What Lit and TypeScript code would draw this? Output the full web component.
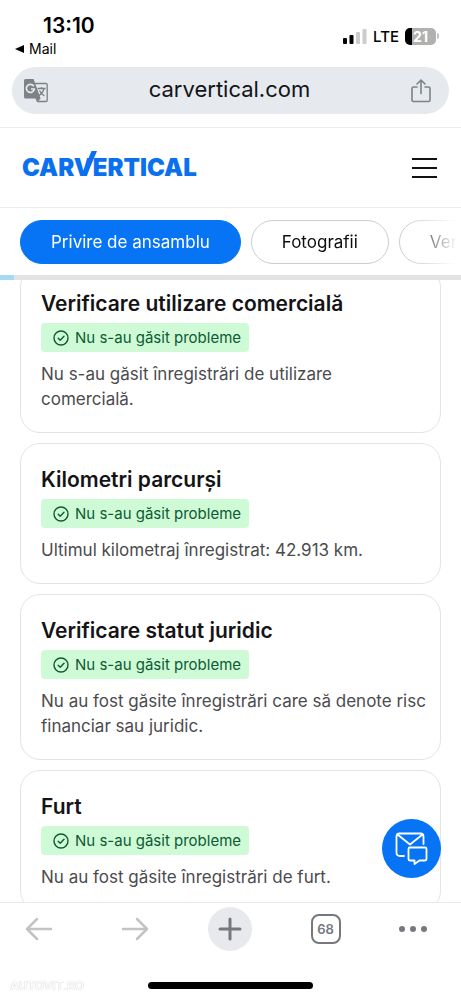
import { LitElement, html, css } from "lit";
import { customElement, property, query } from "lit/decorators.js";

interface Check {
  title: string;
  text: string;
}

const CHECKS: Check[] = [
  { title: "Verificare utilizare comercială", text: "Nu s-au găsit înregistrări de utilizare comercială." },
  { title: "Kilometri parcurși", text: "Ultimul kilometraj înregistrat: 42.913 km." },
  { title: "Verificare statut juridic", text: "Nu au fost găsite înregistrări care să denote risc financiar sau juridic." },
  { title: "Furt", text: "Nu au fost găsite înregistrări de furt." },
];

const base = css`
  * {
    box-sizing: border-box;
  }
  button {
    display: flex;
    align-items: center;
    justify-content: center;
    flex: none;
    margin: 0;
    padding: 0;
    border: 0;
    background: none;
    color: inherit;
    font: inherit;
    cursor: pointer;
  }
  svg {
    display: block;
    flex: none;
  }
`;

@customElement("check-card")
export class CheckCard extends LitElement {
  @property() heading = "";
  @property() text = "";

  static styles = [
    base,
    css`
      :host {
        display: block;
        padding: 20px 12px 20px 20px;
        border: 1px solid #e4e4e6;
        border-radius: 20px;
        background: #fff;
      }
      .title {
        margin: 0 0 3px;
        font-size: 21px;
        font-weight: 600;
        line-height: 32px;
        color: #141416;
      }
      .badge {
        display: flex;
        align-items: center;
        gap: 6px;
        width: fit-content;
        height: 29px;
        padding: 0 8px 0 12px;
        border-radius: 4px;
        background: #cffad6;
        color: #0b5a32;
        font-size: 15px;
      }
      .text {
        margin: 10px 0 0;
        font-size: 17px;
        line-height: 25px;
        color: #4b4b4e;
      }
    `,
  ];

  render() {
    return html`
      <h2 class="title">${this.heading}</h2>
      <div class="badge">
        <svg width="16" height="16" viewBox="0 0 16 16" fill="none" stroke="currentColor" stroke-width="1.4" stroke-linecap="round" stroke-linejoin="round">
          <circle cx="8" cy="8" r="7" />
          <path d="M5.2 8.3l2 2 3.8-4" />
        </svg>
        <span>Nu s-au găsit probleme</span>
      </div>
      <p class="text">${this.text}</p>
    `;
  }
}

@customElement("app-root")
export class AppRoot extends LitElement {
  @query(".content") content!: HTMLElement;

  static styles = [
    base,
    css`
      :host {
        position: relative;
        display: flex;
        flex-direction: column;
        height: 100vh;
        overflow: hidden;
        background: #fff;
        color: #0d0d0f;
        font-family: Inter, "Liberation Sans", sans-serif;
      }
      .status {
        display: flex;
        justify-content: space-between;
        flex: none;
        height: 67px;
        padding: 13px 22px 0 15px;
      }
      .clock {
        padding-left: 28px;
        font-size: 21px;
        font-weight: 600;
        line-height: 26px;
        color: #000;
      }
      .back {
        display: flex;
        align-items: center;
        gap: 5px;
        font-size: 14px;
        line-height: 20px;
        color: #000;
      }
      .signals {
        display: flex;
        align-items: center;
        gap: 6px;
        height: 46px;
        font-size: 15px;
        font-weight: 500;
        color: #000;
      }
      .battery {
        display: flex;
        align-items: center;
      }
      .level {
        width: 31px;
        height: 17px;
        border-radius: 5px;
        background: linear-gradient(90deg, #000 7px, #b1b1b2 7px);
        color: #fff;
        font-size: 14px;
        font-weight: 700;
        line-height: 17px;
        text-align: center;
      }
      .tip {
        width: 2px;
        height: 6px;
        margin-left: 1px;
        border-radius: 0 2px 2px 0;
        background: #c4c4c5;
      }
      .address {
        display: flex;
        align-items: center;
        justify-content: space-between;
        flex: none;
        height: 47px;
        margin: 0 12px 13px;
        padding: 0 18px 0 12px;
        border-radius: 24px;
        background: #e6e9ed;
        color: #7d8287;
      }
      .url {
        padding-bottom: 3px;
        color: #111418;
        font-size: 22px;
      }
      .header {
        display: flex;
        align-items: center;
        justify-content: space-between;
        flex: none;
        height: 81px;
        padding: 0 24px 0 22px;
        border-top: 1px solid #ececee;
        border-bottom: 1px solid #ececee;
      }
      .logo {
        color: #0a70f0;
        font-size: 24px;
        font-weight: 900;
        line-height: 28px;
        text-decoration: none;
      }
      .vee {
        position: relative;
      }
      .slash {
        position: absolute;
        left: 7px;
        top: -2px;
      }
      .tabs {
        display: flex;
        gap: 10px;
        flex: none;
        padding: 12px 0 11px 20px;
        overflow: hidden;
        mask-image: linear-gradient(90deg, #000 calc(100% - 55px), transparent calc(100% - 4px));
      }
      .tab {
        height: 44px;
        padding: 0 30px;
        border: 1px solid #cdcdd0;
        border-radius: 22px;
        font-size: 17px;
      }
      .tab.active {
        border-color: #0674f5;
        background: #0674f5;
        color: #fff;
      }
      .progress {
        flex: none;
        height: 5px;
        background: #e3e3e3;
      }
      .done {
        height: 100%;
        background: #a5daf6;
      }
      .content {
        flex: 1;
        min-height: 0;
        overflow-y: auto;
        scrollbar-width: none;
      }
      .cards {
        display: flex;
        flex-direction: column;
        gap: 10px;
        padding: 12px 20px 30px;
      }
      .toolbar {
        display: flex;
        justify-content: space-between;
        flex: none;
        padding: 4px 34px 0 17px;
        border-top: 1px solid #e8e8ea;
        color: #75797e;
      }
      .tool {
        width: 44px;
        height: 44px;
      }
      .tool.dim {
        color: #c2c3c5;
      }
      .tool.add {
        border-radius: 50%;
        background: #e8e9ed;
      }
      .tool.more {
        width: 28px;
      }
      .count {
        width: 30px;
        height: 30px;
        border: 2px solid #75797e;
        border-radius: 8px;
        font-size: 13px;
        font-weight: 600;
        line-height: 26px;
      }
      .footer {
        display: grid;
        grid-template-columns: 1fr 165px 1fr;
        align-items: center;
        flex: none;
        height: 26px;
        margin-top: 21px;
      }
      .mark {
        padding-left: 10px;
        color: #fff;
        font-size: 12px;
        font-weight: 600;
        text-shadow: 0 0 1px #b4b4b4;
      }
      .home {
        height: 7px;
        border-radius: 4px;
        background: #000;
      }
      .chat {
        position: absolute;
        right: 20px;
        bottom: 120px;
        width: 59px;
        height: 59px;
        border-radius: 50%;
        background: #0674f5;
        color: #fff;
      }
    `,
  ];

  firstUpdated() {
    requestAnimationFrame(() => {
      this.content.scrollTop = 25;
    });
  }

  render() {
    return html`
      <div class="status">
        <div>
          <div class="clock">13:10</div>
          <button class="back">
            <svg width="9" height="8" viewBox="0 0 9 8" fill="currentColor"><path d="M9 0v8L0 4z" /></svg>
            Mail
          </button>
        </div>
        <div class="signals">
          <svg width="24" height="16" viewBox="0 0 24 16">
            <rect x="0" y="10" width="4" height="6" rx="1" fill="#000" />
            <rect x="6.5" y="7" width="4" height="9" rx="1" fill="#000" />
            <rect x="13" y="4" width="4" height="12" rx="1" fill="#ccc" />
            <rect x="19.5" y="1" width="4" height="15" rx="1" fill="#ccc" />
          </svg>
          <span>LTE</span>
          <span class="battery"><span class="level">21</span><span class="tip"></span></span>
        </div>
      </div>

      <div class="address">
        <button aria-label="Traducere">
          <svg width="24" height="24" viewBox="0 0 24 24">
            <path d="M11 4.500h11q1.200 0 1.200 1.200v15.600q0 1.200-1.200 1.200H14" fill="none" stroke="currentColor" stroke-width="1.300" />
            <path d="M1.500 0H9.600l7 19.500H1.500Q0 19.500 0 18V1.500Q0 0 1.500 0zM11.500 19.500h5l-3.300 4z" fill="currentColor" />
            <path d="M9.800 7.300A4 4 0 1 0 10.300 10H7" fill="none" stroke="#e6e9ed" stroke-width="1.700" />
            <path d="M13.500 9.500h8M17.500 8v1.500M20 9.500q-1 4.500-5 7M15.500 11.500q1.500 3.500 5 5.500" fill="none" stroke="currentColor" stroke-width="1.300" />
          </svg>
        </button>
        <span class="url">carvertical.com</span>
        <button aria-label="Distribuie">
          <svg width="20" height="24" viewBox="0 0 20 24" fill="none" stroke="currentColor" stroke-width="1.600" stroke-linecap="round" stroke-linejoin="round">
            <path d="M6 8H2.500Q1 8 1 9.500v11.500Q1 22.500 2.500 22.500h15q1.500 0 1.500-1.500V9.500Q19 8 17.500 8H14M10 14.500V1.500M6 5l4-4 4 4" />
          </svg>
        </button>
      </div>

      <header class="header">
        <a class="logo" href="#">CAR<span class="vee">V<svg class="slash" width="16" height="25" viewBox="0 0 16 25"><path d="M10.500 0H16L5.500 25H0z" fill="currentColor" /></svg></span>ERTICAL</a>
        <button aria-label="Meniu">
          <svg width="25" height="22" viewBox="0 0 25 22" stroke="#111" stroke-width="2"><path d="M0 2h25M0 11h25M0 20h25" /></svg>
        </button>
      </header>

      <nav class="tabs">
        <button class="tab active">Privire de ansamblu</button>
        <button class="tab">Fotografii</button>
        <button class="tab">Verificări</button>
      </nav>
      <div class="progress"><div class="done" style="width: 3%"></div></div>

      <main class="content">
        <div class="cards">
          ${CHECKS.map((c) => html`<check-card .heading=${c.title} .text=${c.text}></check-card>`)}
        </div>
      </main>

      <nav class="toolbar">
        <button class="tool dim" aria-label="Înapoi">
          <svg width="28" height="24" viewBox="0 0 28 24" fill="none" stroke="currentColor" stroke-width="2.500" stroke-linecap="round" stroke-linejoin="round"><path d="M26 12H2M12 2L2 12l10 10" /></svg>
        </button>
        <button class="tool dim" aria-label="Înainte">
          <svg width="28" height="24" viewBox="0 0 28 24" fill="none" stroke="currentColor" stroke-width="2.500" stroke-linecap="round" stroke-linejoin="round"><path d="M2 12h24M16 2l10 10-10 10" /></svg>
        </button>
        <button class="tool add" aria-label="Filă nouă">
          <svg width="24" height="24" viewBox="0 0 24 24" stroke="currentColor" stroke-width="3" stroke-linecap="round"><path d="M12 2v20M2 12h20" /></svg>
        </button>
        <button class="tool" aria-label="File deschise"><span class="count">68</span></button>
        <button class="tool more" aria-label="Mai multe">
          <svg width="28" height="6" viewBox="0 0 28 6" fill="currentColor"><circle cx="3" cy="3" r="3" /><circle cx="14" cy="3" r="3" /><circle cx="25" cy="3" r="3" /></svg>
        </button>
      </nav>
      <div class="footer">
        <span class="mark">AUTOVIT.RO</span>
        <span class="home"></span>
      </div>

      <button class="chat" aria-label="Mesaje">
        <svg width="33" height="33" viewBox="0 0 33 33" fill="none" stroke="currentColor" stroke-width="1.800" stroke-linecap="round" stroke-linejoin="round">
          <path d="M9 24H5Q1.500 24 1.500 20.500V4.500Q1.500 1.500 4.500 1.500h21q3 0 3 3V12M2.500 2.500L15 12.500 27.500 2.500" />
          <path d="M15 15.500h15q1.500 0 1.500 1.500v10q0 1.500-1.500 1.500H24.500L19.500 32v-3.500H15q-1.500 0-1.500-1.500V17q0-1.500 1.500-1.500z" />
        </svg>
      </button>
    `;
  }
}
